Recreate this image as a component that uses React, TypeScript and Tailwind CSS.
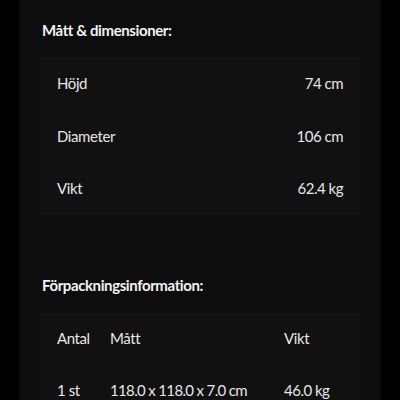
export default function App() {
  const dims = [
    ["Höjd", "74 cm"],
    ["Diameter", "106 cm"],
    ["Vikt", "62.4 kg"],
  ];
  return (
    <div
      className="w-[400px] h-[400px] bg-black overflow-hidden flex justify-center tracking-[-0.4px]"
      style={{ fontFamily: "Lato, 'Noto Sans', sans-serif" }}
    >
      <div className="w-[362px] h-full bg-[#0d0d0d] px-[21px] pt-[19px] flex flex-col">
        <h2 className="text-[15px] leading-[22px] font-bold text-[#f2f2f2] pl-[2px]">Mått &amp; dimensioner:</h2>
        <div className="mt-[16px] bg-[#111111] flex flex-col">
          {dims.map(([k, v]) => (
            <div key={k} className="h-[52.5px] flex items-center justify-between px-[17px] text-[15px] text-[#e6e6e6]">
              <span>{k}</span>
              <span className="tracking-[-0.5px]">{v}</span>
            </div>
          ))}
        </div>
        <div className="mt-[30px] h-px bg-[#1f1f1f]" />
        <h2 className="mt-[29px] text-[15px] leading-[22px] font-bold text-[#f2f2f2] pl-[2px]">Förpackningsinformation:</h2>
        <div className="mt-[17px] bg-[#111111] flex flex-col text-[15px] text-[#e6e6e6]">
          <div className="h-[52px] flex items-center px-[17px]">
            <span className="w-[53px]">Antal</span>
            <span className="w-[174px]">Mått</span>
            <span>Vikt</span>
          </div>
          <div className="h-[52px] flex items-center px-[17px]">
            <span className="w-[53px]">1 st</span>
            <span className="w-[174px] tracking-[-0.65px]">118.0 x 118.0 x 7.0 cm</span>
            <span className="tracking-[-0.5px]">46.0 kg</span>
          </div>
        </div>
      </div>
    </div>
  );
}
